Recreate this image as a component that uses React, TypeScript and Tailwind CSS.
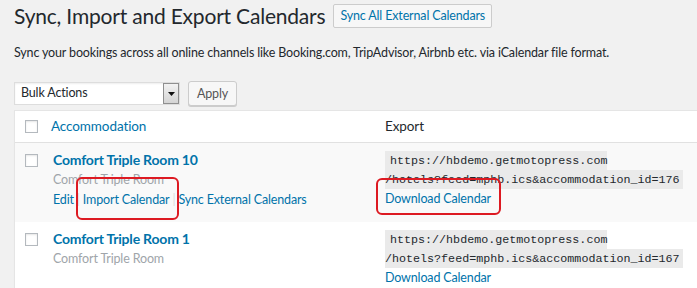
import React from 'react';

type Room = {
  id: number;
  title: string;
  type: string;
  showActions: boolean;
  striped: boolean;
};

const rooms: Room[] = [
  { id: 176, title: 'Comfort Triple Room 10', type: 'Comfort Triple Room', showActions: true, striped: true },
  { id: 167, title: 'Comfort Triple Room 1', type: 'Comfort Triple Room', showActions: false, striped: false },
];

const Checkbox: React.FC = () => (
  <span className="block w-[13px] h-[13px] border border-[#b4b9be] bg-white shadow-[inset_0_1px_2px_rgba(0,0,0,0.1)]" />
);

const App: React.FC = () => {
  return (
    <div className="relative w-[697px] h-[288px] overflow-hidden bg-[#f1f1f1] font-['Lato','Open_Sans',sans-serif] text-[12.5px] tracking-[-0.15px] text-[#23282d]">
      <div className="pl-[14px]">
        {/* Page heading */}
        <div className="flex items-center pt-[4px] h-[24px] box-content">
          <h1 className="text-[21px] leading-[24px] tracking-[-0.2px] font-normal text-[#23282d]">
            Sync, Import and Export Calendars
          </h1>
          <button className="ml-[8px] h-[24px] px-[6px] border border-[#cccccc] bg-[#f7f7f7] rounded-[2px] leading-[22px] text-[#0073aa]">
            Sync All External Calendars
          </button>
        </div>

        <p className="mt-[15px] leading-[20px]">
          Sync your bookings across all online channels like Booking.com, TripAdvisor, Airbnb etc. via iCalendar file format.
        </p>

        {/* Bulk actions */}
        <div className="flex items-center gap-[8px] mt-[18px] h-[25px]">
          <div className="flex items-center w-[166px] h-[23px] bg-white border border-[#dddddd] shadow-[inset_0_1px_2px_rgba(0,0,0,0.07)]">
            <span className="flex-1 pl-[6px] text-[#23282d]">Bulk Actions</span>
            <span className="flex items-center justify-center w-[16px] h-[21px] border border-[#8f8f8f] bg-gradient-to-b from-[#f2f2f2] to-[#d4d4d4]">
              <svg width="7" height="4" viewBox="0 0 7 4">
                <path d="M0 0h7L3.5 4z" fill="#111" />
              </svg>
            </span>
          </div>
          <button className="h-[25px] w-[49px] border border-[#cccccc] bg-[#f7f7f7] rounded-[3px] shadow-[0_1px_0_#cccccc] text-[#555555] leading-[23px]">
            Apply
          </button>
        </div>

        {/* List table */}
        <div className="mt-[4px] w-[700px] border border-[#e5e5e5] bg-white shadow-[0_1px_1px_rgba(0,0,0,0.04)]">
          <div className="flex items-center h-[32px] border-b border-[#e1e1e1] text-[13.5px] tracking-[-0.1px]">
            <div className="w-[36px] pl-[10px]">
              <Checkbox />
            </div>
            <div className="w-[334px] text-[#0073aa]">Accommodation</div>
            <div>Export</div>
          </div>

          {rooms.map((room) => (
            <div
              key={room.id}
              className={`flex h-[79px] ${room.striped ? 'bg-[#f9f9f9]' : 'bg-white'}`}
            >
              <div className="w-[36px] pl-[10px] pt-[11px]">
                <Checkbox />
              </div>
              <div className="w-[334px] pl-[2px] pt-[6px]">
                <div className="text-[14px] leading-[21px] tracking-[-0.2px] font-bold text-[#0073aa]">
                  {room.title}
                </div>
                <div className="leading-[20px] text-[#a0a5aa]">{room.type}</div>
                {room.showActions && (
                  <div className="flex gap-[3px] leading-[19px] text-[#0073aa]">
                    <span>Edit</span>
                    <span className="text-[#dddddd]">|</span>
                    <span>Import Calendar</span>
                    <span className="text-[#dddddd]">|</span>
                    <span>Sync External Calendars</span>
                  </div>
                )}
              </div>
              <div className="pt-[8px]">
                <div className="leading-[18px] font-['DejaVu_Sans_Mono',monospace] text-[11.7px] tracking-normal text-[#23282d]">
                  <code className="bg-[#eaeaea] pt-[3px] pb-[2px] pl-[5px] pr-[3px] [box-decoration-break:slice]">
                    https://hbdemo.getmotopress.com
                    <br />
                    /hotels?feed=mphb.ics&amp;accommodation_id={room.id}
                  </code>
                </div>
                <div className="leading-[20px] text-[#0073aa]">Download Calendar</div>
              </div>
            </div>
          ))}
        </div>
      </div>

      {/* Annotation boxes drawn over the screenshot */}
      <div className="absolute left-[76px] top-[177px] w-[103px] h-[43px] border-2 border-[#dd1a22] rounded-[6px]" />
      <div className="absolute left-[376px] top-[178px] w-[125px] h-[37px] border-2 border-[#dd1a22] rounded-[6px]" />
    </div>
  );
};

export default App;
